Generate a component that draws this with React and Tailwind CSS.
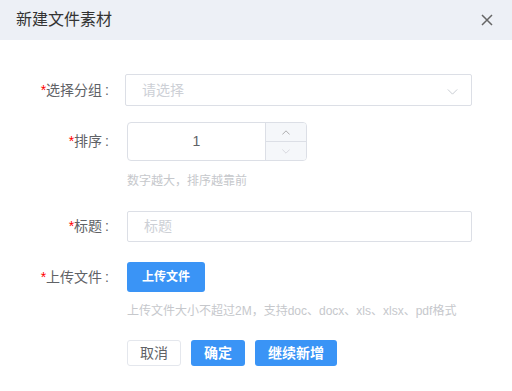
import React from 'react';

const Label = ({ text }) => (
  <div className="w-[110px] shrink-0 text-right text-[14px] text-[#606266]">
    <span className="text-[#f00]">*</span>
    {text}
    <span className="pl-[3px] pr-[1px]">:</span>
  </div>
);

const ChevronDown = ({ className }) => (
  <svg className={className} viewBox="0 0 12 7" fill="none" stroke="currentColor" strokeWidth="1">
    <path d="M0.5 0.5 L6 6 L11.5 0.5" />
  </svg>
);

const ChevronUp = ({ className }) => (
  <svg className={className} viewBox="0 0 12 7" fill="none" stroke="currentColor" strokeWidth="1">
    <path d="M0.5 6.5 L6 1 L11.5 6.5" />
  </svg>
);

const App = () => {
  return (
    <div className="w-[512px] h-[391px] bg-white font-['Liberation_Sans','Noto_Sans_CJK_SC',sans-serif] overflow-hidden">
      {/* header */}
      <div className="h-10 bg-[#edf0f6] flex items-center justify-between pl-4 pr-[19px]">
        <span className="text-[16px] text-[#333]">新建文件素材</span>
        <svg width="12" height="12" viewBox="0 0 12 12" stroke="#666" strokeWidth="1.5">
          <path d="M1 1 L11 11 M11 1 L1 11" />
        </svg>
      </div>

      {/* 选择分组 */}
      <div className="mt-[34px] flex items-center">
        <Label text="选择分组" />
        <div className="ml-[15px] w-[347px] h-8 border border-[#dcdfe6] rounded-[2px] flex items-center justify-between pl-[16px] pr-[13px]">
          <span className="text-[14px] text-[#cdd0d6]">请选择</span>
          <ChevronDown className="w-[11px] h-[6px] text-[#c0c4cc] mt-1" />
        </div>
      </div>

      {/* 排序 */}
      <div className="mt-4 flex items-center">
        <Label text="排序" />
        <div className="ml-[17px] w-[180px] h-[39px] border border-[#dcdfe6] rounded-[4px] flex overflow-hidden">
          <div className="flex-1 flex items-center justify-center text-[14px] text-[#606266]">1</div>
          <div className="w-[41px] border-l border-[#dcdfe6] bg-[#f5f7fa] flex flex-col">
            <div className="flex-1 flex items-center justify-center border-b border-[#dcdfe6]">
              <ChevronUp className="w-[8px] h-[5px] text-[#888]" />
            </div>
            <div className="flex-1 flex items-center justify-center">
              <ChevronDown className="w-[8px] h-[5px] text-[#c8cbd1]" />
            </div>
          </div>
        </div>
      </div>
      <div className="mt-[10px] pl-[127px] text-[12px] leading-5 text-[#c6c8cc]">数字越大，排序越靠前</div>

      {/* 标题 */}
      <div className="mt-5 flex items-center">
        <Label text="标题" />
        <div className="ml-[17px] w-[345px] h-[31px] border border-[#dcdfe6] rounded-[2px] flex items-center pl-[16px]">
          <span className="text-[14px] text-[#cdd0d6]">标题</span>
        </div>
      </div>

      {/* 上传文件 */}
      <div className="mt-5 flex items-center">
        <Label text="上传文件" />
        <button className="ml-[17px] w-[78px] h-[30px] rounded-[3px] bg-[#3a94f6] text-white text-[12px] font-bold">
          上传文件
        </button>
      </div>
      <div className="mt-[9px] pl-[127px] text-[12px] leading-5 text-[#c6c8cc]">
        上传文件大小不超过2M，支持doc、docx、xls、xlsx、pdf格式
      </div>

      {/* actions */}
      <div className="mt-[19px] pl-[127px] flex gap-[10px]">
        <button className="w-[54px] h-[26px] rounded-[3px] border border-[#e4e7ed] bg-white text-[14px] text-[#606266]">取消</button>
        <button className="w-[54px] h-[26px] rounded-[3px] bg-[#3a94f6] text-white text-[14px] font-bold">确定</button>
        <button className="w-[82px] h-[26px] rounded-[3px] bg-[#3a94f6] text-white text-[14px] font-bold">继续新增</button>
      </div>
    </div>
  );
};

export default App;
